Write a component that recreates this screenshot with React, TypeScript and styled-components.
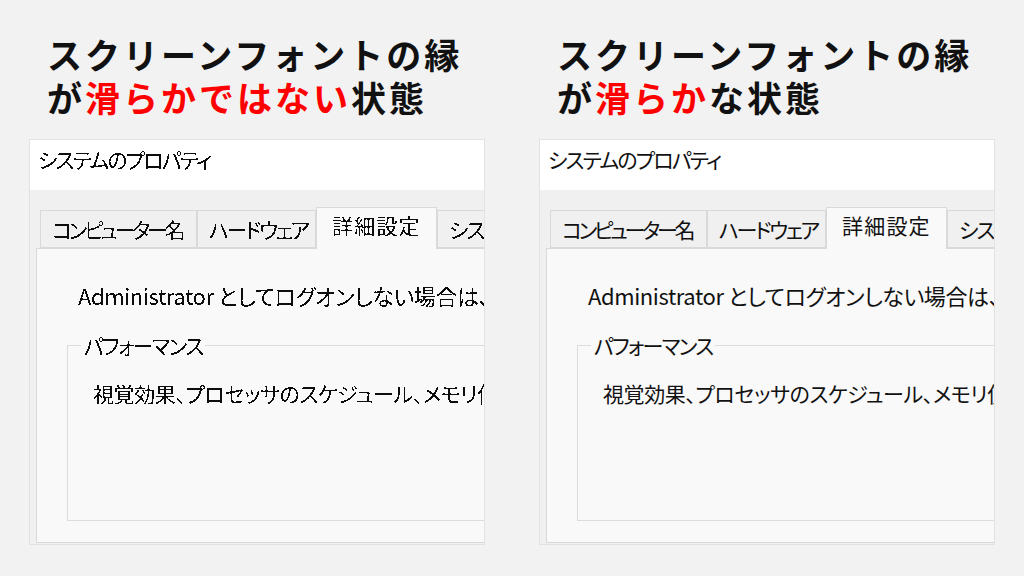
import React from "react";
import styled, { createGlobalStyle, css } from "styled-components";

const GlobalStyle = createGlobalStyle`
  html, body {
    margin: 0;
    padding: 0;
    background: #f2f2f2;
  }
  body {
    width: 1024px;
    height: 576px;
    overflow: hidden;
    font-family: "Noto Sans CJK JP", "Noto Sans", sans-serif;
  }
`;

type Variant = {
  red: string;
  rest: string;
  jaggy: boolean;
};

const VARIANTS: Variant[] = [
  { red: "滑らかではない", rest: "状態", jaggy: true },
  { red: "滑らか", rest: "な状態", jaggy: false },
];

const TABS = [
  { label: "コンピューター名", width: 157, spacing: -3.3 },
  { label: "ハードウェア", width: 119, spacing: -2.4 },
  { label: "詳細設定", width: 121, spacing: 1.2, active: true },
  { label: "システムの保護", width: 140, spacing: -1.8 },
];

const App = () => {
  return (
    <>
      <GlobalStyle />
      <FilterDefs aria-hidden="true">
        <filter id="jaggy" x="0" y="0" width="100%" height="100%">
          <feComponentTransfer>
            <feFuncA type="discrete" tableValues="0 1" />
          </feComponentTransfer>
        </filter>
      </FilterDefs>
      <Page>
        {VARIANTS.map((v, i) => (
          <Column key={i}>
            <Headline>
              スクリーンフォントの縁
              <br />
              が<Red>{v.red}</Red>
              {v.rest}
            </Headline>
            <Window>
              <TitleBar>
                <Txt $jaggy={v.jaggy}>システムのプロパティ</Txt>
              </TitleBar>
              <Body>
                <TabRow>
                  {TABS.map((t) => (
                    <Tab
                      key={t.label}
                      $width={t.width}
                      $spacing={t.spacing}
                      $active={!!t.active}
                    >
                      <Txt $jaggy={v.jaggy}>{t.label}</Txt>
                    </Tab>
                  ))}
                </TabRow>
                <Panel>
                  <Notice>
                    <Txt $jaggy={v.jaggy}>
                      Administrator としてログオンしない場合は、これらのほとんどは変更できません。
                    </Txt>
                  </Notice>
                  <Group>
                    <Legend>
                      <Txt $jaggy={v.jaggy}>パフォーマンス</Txt>
                    </Legend>
                    <GroupText>
                      <Txt $jaggy={v.jaggy}>
                        視覚効果、プロセッサのスケジュール、メモリ使用、および仮想メモリ
                      </Txt>
                    </GroupText>
                  </Group>
                </Panel>
              </Body>
            </Window>
          </Column>
        ))}
      </Page>
    </>
  );
};

const FilterDefs = styled.svg`
  position: absolute;
  width: 0;
  height: 0;
`;

const Page = styled.main`
  display: flex;
  gap: 54px;
  padding: 0 29px;
`;

const Column = styled.section`
  width: 456px;
  display: flex;
  flex-direction: column;
`;

const Headline = styled.h1`
  margin: 0;
  padding: 32px 0 0 18px;
  height: 88px;
  font-size: 35px;
  line-height: 43px;
  font-weight: 700;
  letter-spacing: 3px;
  color: #111;
  white-space: nowrap;
`;

const Red = styled.span`
  color: #ff0000;
`;

const Window = styled.div`
  margin-top: 19px;
  height: 406px;
  box-sizing: border-box;
  border: 1px solid #e2e2e2;
  background: #f0f0f0;
  overflow: hidden;
  display: flex;
  flex-direction: column;
  color: #111;
  font-feature-settings: "palt";
`;

const Txt = styled.span<{ $jaggy: boolean }>`
  display: inline-block;
  white-space: nowrap;
  ${(p) =>
    p.$jaggy &&
    css`
      filter: url(#jaggy);
    `}
`;

const TitleBar = styled.div`
  height: 50px;
  flex-shrink: 0;
  box-sizing: border-box;
  background: #ffffff;
  padding: 6px 0 0 8px;
  font-size: 21px;
  line-height: 26px;
  letter-spacing: -1.8px;
`;

const Body = styled.div`
  flex: 1;
  display: flex;
  flex-direction: column;
  padding: 17px 0 0 6px;
  min-width: 0;
`;

const TabRow = styled.div`
  display: flex;
  align-items: flex-end;
  padding-left: 4px;
  height: 41px;
  position: relative;
  z-index: 1;
`;

const Tab = styled.div<{ $width: number; $spacing: number; $active: boolean }>`
  flex-shrink: 0;
  width: ${(p) => p.$width}px;
  box-sizing: border-box;
  height: ${(p) => (p.$active ? 42 : 38)}px;
  margin-bottom: ${(p) => (p.$active ? -1 : 0)}px;
  border: 1px solid #d9d9d9;
  border-bottom: ${(p) => (p.$active ? "none" : "1px solid #d9d9d9")};
  background: ${(p) => (p.$active ? "#f9f9f9" : "#f0f0f0")};
  padding: ${(p) => (p.$active ? "0 0 0 15px" : "0 0 0 11px")};
  font-size: 21px;
  line-height: ${(p) => (p.$active ? 34 : 36)}px;
  letter-spacing: ${(p) => p.$spacing}px;
  white-space: nowrap;
  overflow: hidden;
`;

const Panel = styled.div`
  flex: 1;
  width: 600px;
  border: 1px solid #d9d9d9;
  background: #f9f9f9;
  padding: 33px 0 0 41px;
  box-sizing: border-box;
  display: flex;
  flex-direction: column;
  margin-bottom: 1px;
`;

const Notice = styled.div`
  font-size: 22px;
  line-height: 26px;
  letter-spacing: -0.4px;
`;

const Group = styled.fieldset`
  margin: 25px 0 0 -11px;
  width: 560px;
  height: 188px;
  box-sizing: border-box;
  border: 1px solid #dcdcdc;
  padding: 0 0 0 25px;
`;

const Legend = styled.legend`
  font-size: 21px;
  line-height: 24px;
  letter-spacing: -1.7px;
  padding: 0 3px;
  margin-left: -12px;
`;

const GroupText = styled.div`
  margin-top: 24px;
  font-size: 21px;
  line-height: 24px;
  letter-spacing: -0.4px;
`;

export default App;
